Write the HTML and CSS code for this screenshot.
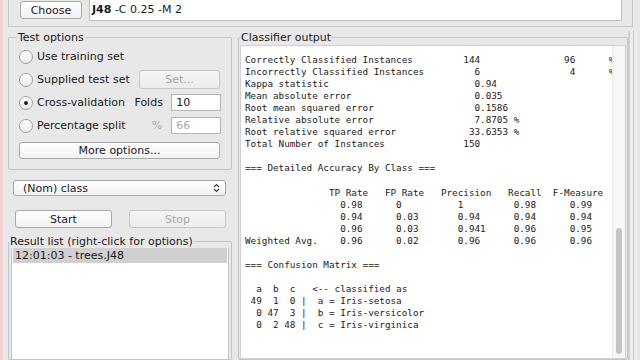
FILE: index.html
```html
<!DOCTYPE html>
<html>
<head>
<meta charset="utf-8">
<link rel="stylesheet" href="styles.css">
</head>
<body>
<div class="app">
  <div class="topwrap">
    <div class="topbox">
      <button class="btn choose">Choose</button>
      <div class="cmd"><b>J48</b> -C 0.25 -M 2</div>
    </div>
  </div>
  <div class="main">
    <div class="left">
      <fieldset class="group test">
        <legend>Test options</legend>
        <div class="opt"><span class="radio"></span><span class="lbl">Use training set</span></div>
        <div class="opt"><span class="radio"></span><span class="lbl">Supplied test set</span><span class="btn set dis">Set...</span></div>
        <div class="opt"><span class="radio on"></span><span class="lbl">Cross-validation</span><span class="fl">Folds</span><span class="input">10</span></div>
        <div class="opt"><span class="radio"></span><span class="lbl">Percentage split</span><span class="fl dis">%</span><span class="input dis">66</span></div>
        <div class="btn more">More options...</div>
      </fieldset>
      <div class="select"><span>(Nom) class</span><svg class="arr" width="7" height="10" viewBox="0 0 7 10"><path d="M1 4 L3.5 1.5 L6 4 M1 6 L3.5 8.5 L6 6" fill="none" stroke="#444" stroke-width="1.2"/></svg></div>
      <div class="actions"><div class="btn act">Start</div><div class="btn act dis">Stop</div></div>
      <fieldset class="group results">
        <legend>Result list (right-click for options)</legend>
        <div class="list"><div class="item sel">12:01:03 - trees.J48</div></div>
      </fieldset>
    </div>
    <div class="right">
      <fieldset class="group output">
        <legend>Classifier output</legend>
        <div class="textarea">
<pre class="out">Correctly Classified Instances         144               96      %
Incorrectly Classified Instances         6                4      %
Kappa statistic                          0.94
Mean absolute error                      0.035
Root mean squared error                  0.1586
Relative absolute error                  7.8705 %
Root relative squared error             33.6353 %
Total Number of Instances              150

=== Detailed Accuracy By Class ===

               TP Rate   FP Rate   Precision   Recall  F-Measure
                 0.98      0          1         0.98      0.99
                 0.94      0.03       0.94      0.94      0.94
                 0.96      0.03       0.941     0.96      0.95
Weighted Avg.    0.96      0.02       0.96      0.96      0.96

=== Confusion Matrix ===

  a  b  c   &lt;-- classified as
 49  1  0 |  a = Iris-setosa
  0 47  3 |  b = Iris-versicolor
  0  2 48 |  c = Iris-virginica</pre>
          <div class="vscroll"><div class="thumb"></div></div>
        </div>
      </fieldset>
    </div>
    <div class="edge"></div>
  </div>
</div>
</body>
</html>
```
FILE: styles.css
```css
html, body { margin: 0; padding: 0; }
body {
  width: 640px; height: 360px; overflow: hidden;
  background: #e8e8e8;
  font-family: "DejaVu Sans", sans-serif;
  font-size: 11px; color: #1a1a1a;
}
.app {
  height: 360px; overflow: hidden;
  border-left: 3px solid #f1d2d2;
  display: flex; flex-direction: column;
}
.topwrap { height: 31px; padding-left: 5px; padding-right: 7px; }
.topbox {
  height: 27px; box-sizing: border-box;
  border: 1px solid #c6c6c6; border-top: none;
  display: flex; align-items: flex-start;
  padding-left: 11px;
}
.btn {
  box-sizing: border-box;
  border: 1px solid #a9a9a9; border-radius: 3px;
  background: linear-gradient(#ffffff, #f1f1f1);
  font-family: "DejaVu Sans", sans-serif; font-size: 11px; color: #1a1a1a;
  display: flex; align-items: center; justify-content: center;
  padding: 0;
}
.btn.dis { color: #a8a8a8; border-color: #c6c6c6; background: linear-gradient(#f4f4f4, #ececec); }
.choose { width: 62px; height: 18px; margin-top: 1px; }
.cmd {
  margin-left: 7px; width: 533px; height: 22px; box-sizing: border-box;
  margin-top: -1px;
  background: #fff; border: 1px solid #bdbdbd;
  padding: 3px 0 0 2px; font-size: 11px; white-space: nowrap;
}
.cmd b { font-weight: bold; }
.main { flex: 1; display: flex; min-height: 0; }
.left { width: 224px; margin-left: 5px; display: flex; flex-direction: column; min-height: 0; }
.group {
  margin: 0; border: 1px solid #c4c4c4; border-radius: 2px;
  min-width: 0;
}
.group legend { padding: 0 1px; font-size: 11px; line-height: 13px; margin-left: -2px; }
.test { padding: 1px 10px 8px 10px; height: 139px; box-sizing: border-box; flex: none; }
.opt { display: flex; align-items: center; height: 23px; }
.radio {
  width: 14px; height: 14px; box-sizing: border-box; border-radius: 50%;
  border: 1px solid #a0a0a0; background: linear-gradient(#ffffff, #ebebeb);
  position: relative; flex: none;
}
.radio.on::after {
  content: ""; position: absolute; left: 4px; top: 4px;
  width: 4px; height: 4px; border-radius: 50%; background: #222;
}
.lbl { margin-left: 4px; width: 97px; white-space: nowrap; }
.set { width: 81px; height: 19px; margin-left: 5px; }
.fl { width: 37px; white-space: nowrap; margin-left: 1px; }
.fl.dis { color: #a8a8a8; text-align: right; padding-right: 9px; box-sizing: border-box; }
.input {
  width: 50px; height: 17px; box-sizing: border-box;
  background: #fff; border: 1px solid #b5b5b5; padding: 1px 0 0 4px;
}
.input.dis { color: #a8a8a8; }
.more { width: 201px; height: 17px; margin-top: 5px; }
.select {
  margin: 10px 6px 0 5px; height: 16px; box-sizing: border-box; flex: none;
  border: 1px solid #a9a9a9; border-radius: 3px;
  background: linear-gradient(#ffffff, #f0f0f0);
  display: flex; align-items: center; justify-content: space-between;
  padding: 0 5px 0 9px;
}
.actions { display: flex; justify-content: space-between; margin: 14px 6px 0 7px; flex: none; }
.act { width: 97px; height: 18px; }
.results { flex: 1; margin-top: 7px; padding: 0 2px; min-height: 0; overflow: hidden; }
.list { background: #fff; border: 1px solid #c2c2c2; height: 120px; padding: 0; margin-top: -1px; }
.item { height: 15px; line-height: 15px; padding-left: 2px; }
.item.sel { background: #d0d0d0; margin: 0 1px; }
.right { width: 390px; margin-left: 6px; display: flex; }
.output { flex: 1; padding: 0 1px 0 1px; display: flex; flex-direction: column; min-height: 0; }
.output legend { margin-left: 1px; padding: 0; }
.textarea {
  flex: 1; background: #fff; position: relative; overflow: hidden;
  border: 1px solid #d0d0d0; margin-top: 1px; min-height: 0;
}
.out {
  margin: 0; padding: 8px 0 0 4px;
  font-family: "DejaVu Sans Mono", monospace; font-size: 9.3px; line-height: 12.05px;
  color: #1a1a1a; white-space: pre;
}
.vscroll {
  position: absolute; right: 0; top: 0; bottom: 0; width: 12px;
  background: #f7f7f7; border-left: 1px solid #ececec;
}
.thumb {
  position: absolute; left: 3px; width: 6px; top: 182px; bottom: 4px;
  background: #c4c4c4; border-radius: 3px;
}
.edge {
  width: 10px; border-left: 2px solid #cfcfcf; box-sizing: border-box;
  background: linear-gradient(90deg, #ececec 0 3px, #cdcdcd 3px 4px, #ececec 4px);
}
```
